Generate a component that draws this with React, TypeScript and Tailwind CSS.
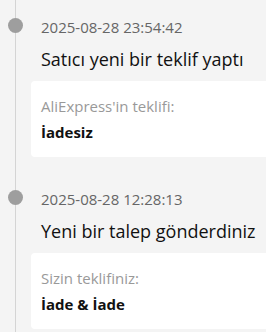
import React from 'react';

interface TimelineEntry {
  time: string;
  title: string;
  label: string;
  value: string;
}

const entries: TimelineEntry[] = [
  {
    time: '2025-08-28 23:54:42',
    title: 'Satıcı yeni bir teklif yaptı',
    label: "AliExpress'in teklifi:",
    value: 'İadesiz',
  },
  {
    time: '2025-08-28 12:28:13',
    title: 'Yeni bir talep gönderdiniz',
    label: 'Sizin teklifiniz:',
    value: 'İade & İade',
  },
];

const TimelineItem: React.FC<{ entry: TimelineEntry }> = ({ entry }) => (
  <div className="flex">
    {/* Rail */}
    <div className="w-[31px] shrink-0 flex flex-col items-center">
      <div className="w-px h-[18px] bg-[#d4d4d4]" />
      <div className="w-[15px] h-[15px] rounded-full bg-[#9e9e9e] shrink-0" />
      <div className="w-px flex-1 bg-[#d4d4d4]" />
    </div>

    {/* Content */}
    <div className="flex-1 min-w-0 pt-[17px] pb-[15px]">
      <div className="pl-[10px] text-[15px] leading-5 text-[#666]">{entry.time}</div>
      <div className="pl-[10px] mt-[9px] text-[18px] leading-[26px] font-medium text-[#111] whitespace-nowrap">
        {entry.title}
      </div>
      <div className="mt-[9px] bg-white rounded-l-[4px] pl-[10px] pt-[13px] pb-[13px]">
        <div className="text-[15px] leading-6 text-[#999]">{entry.label}</div>
        <div className="mt-[2px] text-[15px] leading-6 font-bold text-[#111]">{entry.value}</div>
      </div>
    </div>
  </div>
);

export default function App() {
  return (
    <div className="w-[266px] h-[332px] overflow-hidden bg-[#f4f4f4] font-['Open_Sans',sans-serif]">
      {entries.map((entry, i) => (
        <TimelineItem key={i} entry={entry} />
      ))}
    </div>
  );
}
